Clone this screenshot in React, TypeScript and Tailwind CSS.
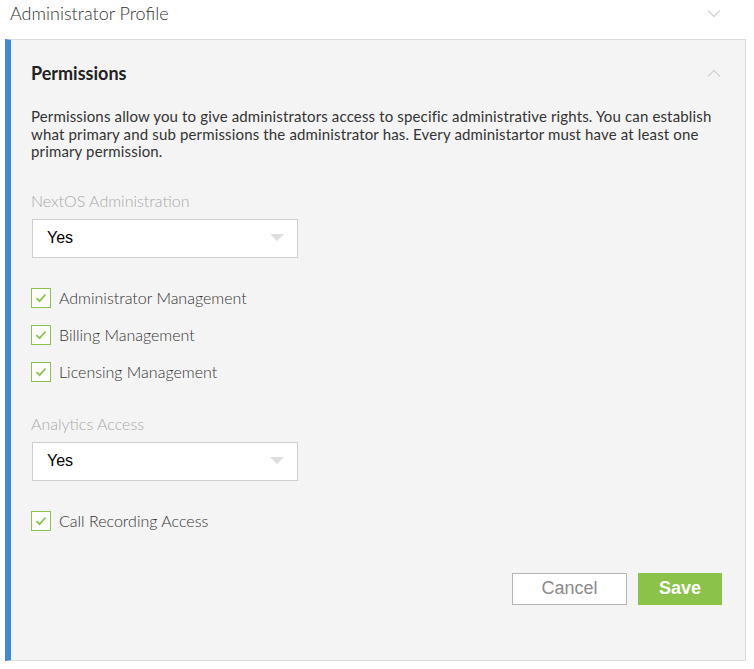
import React from 'react';

const GREEN = '#8bc34a';

function Chevron({ up }: { up?: boolean }) {
  return (
    <svg width="14" height="8" viewBox="0 0 14 8" className="block">
      <path
        d={up ? 'M1 7.5 L7 1.5 L13 7.5' : 'M1 0.5 L7 6.5 L13 0.5'}
        fill="none"
        stroke="#d4d4d4"
        strokeWidth="1.4"
      />
    </svg>
  );
}

function Select({ value }: { value: string }) {
  return (
    <div className="flex h-[39px] w-[266px] items-center justify-between border border-[#cfcfcf] bg-white pl-[14px] pr-[13px]">
      <span className="text-[16px] text-black" style={{ fontFamily: '"Liberation Sans", Arial, sans-serif' }}>
        {value}
      </span>
      <svg width="14" height="8" viewBox="0 0 14 8">
        <path d="M0 0 L14 0 L7 7 Z" fill="#dedede" />
      </svg>
    </div>
  );
}

function Check({ label }: { label: string }) {
  return (
    <div className="flex h-[20px] items-center">
      <div className="flex h-[20px] w-[20px] items-center justify-center border border-[#8bc34a] bg-white">
        <svg width="12" height="10" viewBox="0 0 12 10">
          <path d="M1.5 5.2 L4.6 8.2 L10.5 1.5" fill="none" stroke={GREEN} strokeWidth="1.8" />
        </svg>
      </div>
      <span className="ml-[8px] text-[16px] font-light text-[#333]">{label}</span>
    </div>
  );
}

export default function App() {
  return (
    <div className="h-[669px] w-[754px] bg-white" style={{ fontFamily: 'Lato, "Open Sans", sans-serif' }}>
      {/* collapsed section */}
      <div className="flex h-[39px] items-start justify-between pl-[10px] pr-[33px] pt-[1px]">
        <span className="text-[18px] font-light leading-[24px] text-[#333]">Administrator Profile</span>
        <div className="pt-[9px]">
          <Chevron />
        </div>
      </div>

      {/* expanded section */}
      <div className="ml-[5px] h-[622px] w-[741px] border border-l-[6px] border-[#dcdcdc] border-l-[#3f87d8] bg-[#f4f4f4] pl-[20px] pr-[23px]">
        <div className="flex items-center justify-between pr-[1px] pt-[22px]">
          <h2 className="text-[18px] font-bold leading-[22px] text-[#222]">Permissions</h2>
          <Chevron up />
        </div>

        <p className="mt-[24px] text-[15px] leading-[17.5px] tracking-[0.15px] text-[#333]">
          Permissions allow you to give administrators access to specific administrative rights. You can establish
          what primary and sub permissions the administrator has. Every administartor must have at least one
          primary permission.
        </p>

        <div className="mt-[30px] text-[16px] font-light leading-[20px] text-[#aaa]">NextOS Administration</div>
        <div className="mt-[8px] pl-[1px]">
          <Select value="Yes" />
        </div>

        <div className="mt-[30px] flex flex-col gap-[17px]">
          <Check label="Administrator Management" />
          <Check label="Billing Management" />
          <Check label="Licensing Management" />
        </div>

        <div className="mt-[32px] text-[16px] font-light leading-[20px] text-[#aaa]">Analytics Access</div>
        <div className="mt-[8px] pl-[1px]">
          <Select value="Yes" />
        </div>

        <div className="mt-[30px]">
          <Check label="Call Recording Access" />
        </div>

        <div
          className="mt-[42px] flex justify-end gap-[11px]"
          style={{ fontFamily: '"Liberation Sans", Arial, sans-serif' }}
        >
          <button className="h-[32px] w-[115px] border border-[#b5b5b5] bg-white text-[18px] text-[#8a8a8a]">
            Cancel
          </button>
          <button className="h-[32px] w-[84px] bg-[#8bc34a] text-[18px] font-bold text-white">Save</button>
        </div>
      </div>
    </div>
  );
}
